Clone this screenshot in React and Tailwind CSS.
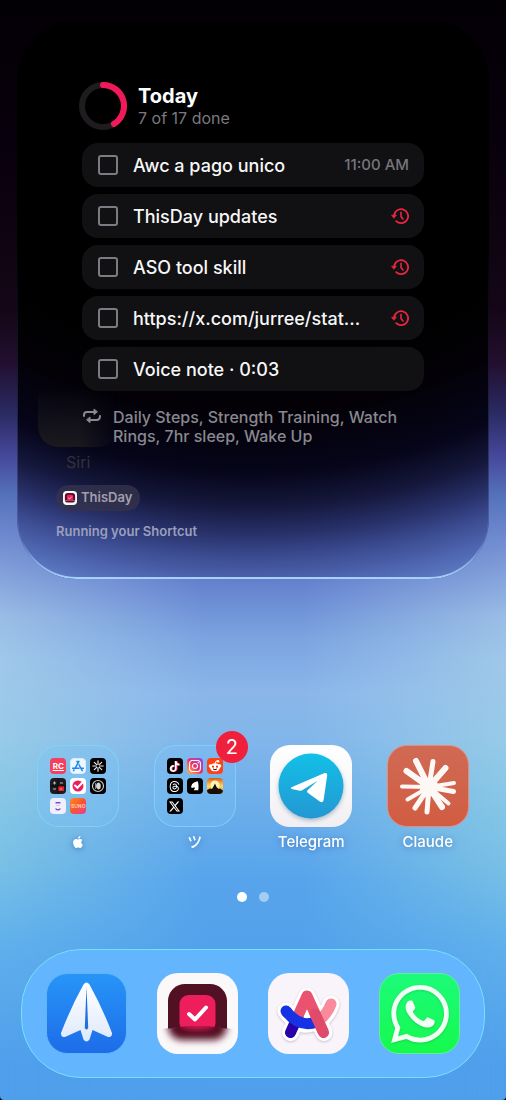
import React from "react";
import {
  SiTiktok,
  SiInstagram,
  SiReddit,
  SiThreads,
  SiX,
  SiAppstore,
  SiWhatsapp,
  SiApple,
} from "react-icons/si";

const tasks = [
  { id: "awc", title: "Awc a pago unico", time: "11:00 AM" },
  { id: "updates", title: "ThisDay updates", overdue: true },
  { id: "aso", title: "ASO tool skill", overdue: true },
  { id: "link", title: "https://x.com/jurree/stat...", overdue: true },
  { id: "voice", title: "Voice note · 0:03" },
];

function ProgressRing() {
  return (
    <svg viewBox="0 0 48 48" className="size-12 shrink-0" fill="none" strokeWidth="6" aria-hidden="true">
      <circle cx="24" cy="24" r="21" stroke="#1f1c20" />
      <path d="M24 3A21 21 0 0 1 35 41.9" stroke="#f2195b" strokeLinecap="round" />
    </svg>
  );
}

function OverdueIcon() {
  return (
    <svg viewBox="0 0 18 18" className="size-[18px] shrink-0" fill="none" stroke="#e8273f" strokeLinecap="round" strokeLinejoin="round" aria-hidden="true">
      <path d="M3.1 9.2A7 7 0 1 1 5.2 14.2" strokeWidth="1.8" />
      <path d="M10 5.4V9.4L12 12" strokeWidth="1.6" />
      <path d="M.9 8.2H5.3L3.1 11Z" fill="#e8273f" strokeWidth=".8" />
    </svg>
  );
}

function RepeatIcon() {
  return (
    <svg viewBox="0 0 20 16" className="h-4 w-5 shrink-0" fill="none" stroke="#8b8a92" strokeWidth="2" strokeLinecap="round" strokeLinejoin="round" aria-hidden="true">
      <path d="M2 8V7Q2 4 5 4H12" />
      <path d="M18 8Q18 12 14.500 12H8" />
      <path d="M12 1.400V6.600L15.200 4Z" fill="#8b8a92" strokeWidth="1" />
      <path d="M8 9.400V14.600L4.800 12Z" fill="#8b8a92" strokeWidth="1" />
    </svg>
  );
}

function TaskRow({ task }) {
  return (
    <li className="flex h-11 items-center rounded-2xl bg-[#111013] px-[15px]">
      <input
        id={task.id}
        type="checkbox"
        className="ml-px size-5 shrink-0 appearance-none rounded-[3px] border-2 border-[#7d7b82] bg-transparent checked:bg-[#f2195b]"
      />
      <label htmlFor={task.id} className="ml-[15px] min-w-0 flex-1 truncate text-[18px] font-medium text-[#f7f7f8]">
        {task.title}
      </label>
      {task.time && <time className="text-[15px] font-medium text-[#77757c]">{task.time}</time>}
      {task.overdue && <OverdueIcon />}
    </li>
  );
}

function Mini({ className, children }) {
  return (
    <span className={"flex size-4 items-center justify-center overflow-hidden rounded-[4px] " + className}>
      {children}
    </span>
  );
}

function Folder({ children }) {
  return (
    <span className="grid size-[82px] grid-cols-3 content-start gap-1 rounded-[22px] border border-[#7fd6f7]/80 bg-[#7cc4fa]/30 p-3">
      {children}
    </span>
  );
}

function BurstIcon({ className, stroke }) {
  return (
    <svg viewBox="0 0 16 16" className={className} stroke={stroke} strokeWidth="1.400" strokeLinecap="round" aria-hidden="true">
      <path d="M8 2V6M8 10V14M2 8H6M10 8H14M3.800 3.800L6.500 6.500M9.500 9.500L12.200 12.200M3.800 12.200L6.500 9.500M9.500 6.500L12.200 3.800" />
    </svg>
  );
}

function UtilityFolder() {
  return (
    <Folder>
      <Mini className="bg-[#f43f5e] text-[8px] leading-none font-bold text-white underline">RC</Mini>
      <Mini className="border border-[#d5ecff] bg-[#eef7ff]">
        <SiAppstore className="size-3 text-[#1c86ee]" />
      </Mini>
      <Mini className="bg-black">
        <BurstIcon className="size-[14px]" stroke="#e6e6e6" />
      </Mini>
      <Mini className="bg-[#1c1c20]">
        <svg viewBox="0 0 16 16" className="size-4" aria-hidden="true">
          <path d="M8 8H14V13H8Z" fill="#e8202c" />
          <path d="M3 5H6M4.500 3.500V6.500M10 5H13M3 11H6M10 11H12" stroke="#b9b9bd" />
          <path d="M8 0V16M0 8H16" stroke="#000" strokeWidth=".6" />
        </svg>
      </Mini>
      <Mini className="bg-white">
        <svg viewBox="0 0 16 16" className="size-4" fill="none" aria-hidden="true">
          <circle cx="8" cy="8" r="5.500" fill="#e91e5a" />
          <path d="M5 7.500L7.400 9.800L13 4" stroke="#fff" strokeWidth="2" strokeLinecap="round" />
        </svg>
      </Mini>
      <Mini className="bg-black">
        <svg viewBox="0 0 16 16" className="size-4" fill="none" aria-hidden="true">
          <circle cx="8" cy="8" r="5.500" stroke="#c9c9c9" strokeWidth="1.200" />
          <path d="M8 4.500Q10.800 4.500 10.800 8T8 11.500Q6 11 6 8T8 4.500Z" fill="#d5d5d5" />
          <path d="M5.500 5V11" stroke="#888" />
        </svg>
      </Mini>
      <Mini className="bg-[#f1effb]">
        <svg viewBox="0 0 16 16" className="size-4" fill="none" aria-hidden="true">
          <path d="M5.500 4H10.500V5.500H5.500Z" fill="#7150c8" />
          <path d="M6 11Q8 12.600 10 11" stroke="#7150c8" strokeWidth="1.400" strokeLinecap="round" />
          <path d="M6 7.500H10" stroke="#d4cdf0" />
        </svg>
      </Mini>
      <Mini className="bg-linear-to-br from-[#ff8a1c] via-[#f9542e] to-[#e63a8c] text-[5px] leading-none font-bold text-[#ffc9a8]">
        SUNO
      </Mini>
    </Folder>
  );
}

function SocialFolder() {
  return (
    <Folder>
      <Mini className="bg-black">
        <SiTiktok className="size-[11px] text-white drop-shadow-[1px_0_0_#f0285a]" />
      </Mini>
      <Mini className="bg-linear-to-tr from-[#fdb62e] via-[#ec2769] to-[#8a35e8]">
        <SiInstagram className="size-3 text-white" />
      </Mini>
      <Mini className="bg-[#ff4214]">
        <svg viewBox="0 0 16 16" className="size-4" aria-hidden="true">
          <circle cx="3.500" cy="8" r="1.800" fill="#fff" />
          <circle cx="12.500" cy="8" r="1.800" fill="#fff" />
          <ellipse cx="8" cy="9.300" rx="5" ry="4" fill="#fff" />
          <circle cx="11" cy="3.200" r="1.300" fill="#fff" />
          <path d="M8 6L9 3.200L11 3.400" stroke="#fff" fill="none" />
          <circle cx="6" cy="8.700" r="1.100" fill="#e33b12" />
          <circle cx="10" cy="8.700" r="1.100" fill="#e33b12" />
          <path d="M6 11Q8 12.300 10 11" stroke="#222" fill="none" />
        </svg>
      </Mini>
      <Mini className="bg-black">
        <SiThreads className="size-[11px] text-white" />
      </Mini>
      <Mini className="bg-black">
        <svg viewBox="0 0 16 16" className="size-4" fill="#fff" aria-hidden="true">
          <path d="M4 9Q4.500 5.500 7.500 4.200L10.600 3.200Q12 6 11.300 12.200H6.800Q8.300 10.500 7.600 9.300L5 9.900Z" />
        </svg>
      </Mini>
      <Mini className="bg-linear-to-b from-[#d35a13] via-[#ffd75c] to-[#ef8b1d]">
        <svg viewBox="0 0 16 16" className="size-4" aria-hidden="true">
          <circle cx="8" cy="7" r="4.500" fill="#fff3b8" />
          <path d="M0 16V12L3 10.500L5 11L7 7.500L8 5.500L9.500 9L11.500 11L13 10.500L16 12.500V16Z" fill="#17100a" />
        </svg>
      </Mini>
      <Mini className="bg-black">
        <SiX className="size-[11px] text-white" />
      </Mini>
    </Folder>
  );
}

function TelegramIcon() {
  return (
    <span className="flex size-[82px] items-center justify-center rounded-[20px] bg-linear-to-b from-white to-[#f1eff3]">
      <svg viewBox="0 0 66 66" className="size-[66px] drop-shadow-[0_2px_2px_rgba(20,80,120,0.35)]" aria-hidden="true">
        <defs>
          <linearGradient id="tg" x1="0" y1="0" x2="0" y2="1">
            <stop offset="0" stopColor="#12c0e6" />
            <stop offset="1" stopColor="#2497d3" />
          </linearGradient>
        </defs>
        <circle cx="33" cy="33" r="32.500" fill="url(#tg)" />
        <path d="M13.500 34.200L46.600 20.100Q49.400 19.300 49.200 22.200L45.600 47Q44.800 50.600 41.800 48.600L29.700 39.800Q28.400 38.600 29.600 37.200L39.500 27.800L24.600 37.100Q22.700 38 20.600 37.400L13.700 35.900Q12 35 13.500 34.200Z" fill="#fff" />
      </svg>
    </span>
  );
}

function ClaudeIcon() {
  return (
    <span className="flex size-[82px] items-center justify-center rounded-[20px] border border-[#ec8a76] bg-linear-to-b from-[#d06a54] to-[#d15c42]">
      <svg viewBox="0 0 80 80" className="size-20 shrink-0" stroke="#fdf7f5" strokeLinecap="round" aria-hidden="true">
        <circle cx="41" cy="41" r="9.500" fill="#fdf7f5" stroke="none" />
        <path d="M41 41L28 15M41 41L18.500 25M41 41L57.500 22M41 41L54 61" strokeWidth="6" />
        <path d="M41 41L45 15.500M41 41L39 66M41 41L65.500 45.500M41 41L27 62" strokeWidth="5" />
        <path d="M41 41L14 40.500M41 41L19.500 53.500M41 41L66 37M41 41L60.500 57.500" strokeWidth="4" />
      </svg>
    </span>
  );
}

function SparkIcon() {
  return (
    <svg viewBox="0 0 81 81" className="size-[81px]" aria-hidden="true">
      <defs>
        <linearGradient id="sparkBg" x1="0" y1="0" x2="0" y2="1">
          <stop offset="0" stopColor="#2795f8" />
          <stop offset="1" stopColor="#1d6ce8" />
        </linearGradient>
        <linearGradient id="sparkWing" x1="0" y1="0" x2="0" y2="1">
          <stop offset="0" stopColor="#fff" />
          <stop offset="1" stopColor="#dfe9fb" />
        </linearGradient>
      </defs>
      <rect x=".5" y=".5" width="80" height="80" rx="21" fill="url(#sparkBg)" stroke="#5fb4fb" />
      <path d="M37.500 11.500Q40.500 7.500 43.500 11.500Q56 34 66 60Q66.300 65 61.500 63.800L46.500 57L43.500 66.500Q40.500 70.500 37.500 66.500L34.500 57L19.500 63.800Q14.700 65 15 60Q25 34 37.500 11.500Z" fill="url(#sparkWing)" />
      <path d="M40.500 14L42.200 55Q40.500 58 38.800 55Z" fill="#2370dd" />
    </svg>
  );
}

function ThisDayIcon({ className }) {
  return (
    <svg viewBox="0 0 81 81" className={className} aria-hidden="true">
      <defs>
        <filter id="soft" x="-30%" y="-60%" width="160%" height="220%">
          <feGaussianBlur stdDeviation="3.500" />
        </filter>
        <clipPath id="upper">
          <path d="M0 0H81V57Q40 50 0 57Z" />
        </clipPath>
        <clipPath id="lower">
          <path d="M0 56.500Q40 49.500 81 56.500V81H0Z" />
        </clipPath>
      </defs>
      <rect width="81" height="81" rx="21" fill="#fbf8fa" />
      <g clipPath="url(#upper)">
        <rect x="11" y="11" width="59" height="70" rx="17" fill="#521024" />
        <rect x="22.500" y="22" width="36" height="37" rx="9" fill="#ee1d5b" />
        <path d="M32 41L38 46.500L49 34.500" fill="none" stroke="#fff" strokeWidth="4" strokeLinecap="round" strokeLinejoin="round" />
      </g>
      <g clipPath="url(#lower)">
        <rect x="11" y="38" width="59" height="29" rx="14" fill="#521024" filter="url(#soft)" />
        <ellipse cx="40.500" cy="51" rx="17" ry="5" fill="#ee1d5b" filter="url(#soft)" />
      </g>
    </svg>
  );
}

function ArcIcon() {
  return (
    <svg viewBox="0 0 81 81" className="size-[81px]" fill="none" strokeLinecap="round" strokeLinejoin="round" aria-hidden="true">
      <rect width="81" height="81" rx="21" fill="#f8f4fa" />
      <g className="drop-shadow-[0_1px_1px_rgba(60,40,80,0.25)]" stroke="#fff" strokeWidth="17">
        <path d="M22.500 59.500L39 23L56 59.500" />
        <path d="M18 38Q30 53 40 51Q57 49 63 31" />
      </g>
      <path d="M30 43L22.500 59.500" stroke="#2a00a8" strokeWidth="11" />
      <path d="M50 48Q59 42 63 31" stroke="#f98b9d" strokeWidth="11" />
      <path d="M29.500 44L39 23L55.500 59.500" stroke="#e9536f" strokeWidth="11" strokeLinecap="butt" />
      <path d="M18 38Q31 55 49 49" stroke="#1632e4" strokeWidth="11" strokeLinecap="butt" />
      <path d="M18 38L19 39.200" stroke="#1632e4" strokeWidth="11" />
      <path d="M47 41L55.500 59.500" stroke="#e04b6b" strokeWidth="11" />
      <path d="M39 37L42.500 44.500Q39 46 35.500 44.500Z" fill="#fff" />
    </svg>
  );
}

function WhatsAppIcon() {
  return (
    <span className="flex size-[81px] items-center justify-center rounded-[20px] border border-[#62ef98] bg-linear-to-b from-[#1cfb79] to-[#16f94b]">
      <SiWhatsapp className="size-[58px] text-[#f1fff5] drop-shadow-[0_1px_1px_rgba(0,120,40,0.25)]" />
    </span>
  );
}

function AppLink({ label, name, badge, children }) {
  return (
    <a href="#" aria-label={name} className="flex flex-col items-center gap-[5px] text-center">
      <span className="relative">
        {children}
        {badge && (
          <span className="absolute -top-[14px] -right-3 flex size-8 items-center justify-center rounded-full bg-[#f01f3c] text-[20px] text-white">
            {badge}
          </span>
        )}
      </span>
      <span className="flex h-5 items-center text-[15px] font-medium text-white drop-shadow-[0_1px_3px_rgba(20,70,150,0.5)]">
        {label}
      </span>
    </a>
  );
}

function DockButton({ name, children }) {
  return (
    <button type="button" aria-label={name} className="flex justify-center">
      {children}
    </button>
  );
}

function ShortcutPanel() {
  return (
    <section className="relative mx-[17px] mt-5 overflow-hidden rounded-[60px] bg-[radial-gradient(135%_100%_at_50%_0,#000_60%,#030106_70%,#06051a_81%,#15183c_87%,#28316a_92%,#3b4b90_96%,#4c62ac_100%,#6080c8_105%)]">
      <div className="pointer-events-none absolute inset-0 rounded-[60px] border border-[#8090e0]/25 mask-[linear-gradient(transparent_40%,black_75%)]" />
      <div className="pointer-events-none absolute inset-0 rounded-[60px] border-2 border-[#a9d3fb] mask-[linear-gradient(transparent_93%,black_100%)]" />
      <div className="absolute top-[346px] left-[21px] h-[81px] w-20 rounded-[20px] bg-linear-to-b from-transparent from-25% to-[#1b1a1e] mask-[linear-gradient(to_right,black_50%,transparent)]" />

      <div className="relative px-[65px] pt-[62px]">
        <header className="-ml-[3px] flex items-center gap-[11px]">
          <ProgressRing />
          <div>
            <h1 className="text-[20px] leading-6 font-bold text-white">Today</h1>
            <p className="text-[16px] leading-5 text-[#7b797f]">7 of 17 done</p>
          </div>
        </header>
        <ul className="mt-[13px] flex flex-col gap-[7px]">
          {tasks.map((task) => (
            <TaskRow key={task.id} task={task} />
          ))}
        </ul>
        <div className="mt-[17px] flex gap-[11px]">
          <RepeatIcon />
          <p className="text-[16px] leading-[19px] font-medium text-[#89888f]">
            Daily Steps, Strength Training, Watch Rings, 7hr sleep, Wake Up
          </p>
        </div>
      </div>

      <div className="relative flex flex-col items-start pt-[6px] pb-[38px] pl-[39px]">
        <p className="ml-[10px] text-[16px] leading-5 text-[#343237]">Siri</p>
        <div className="mt-[13px] flex h-[26px] items-center gap-1 rounded-full bg-[#34334c]/80 pr-2 pl-[7px]">
          <ThisDayIcon className="size-[14px]" />
          <span className="text-[13px] font-semibold text-[#a09fae]">ThisDay</span>
        </div>
        <p className="mt-[10px] text-[13px] leading-5 font-semibold text-[#9a9fbc]">Running your Shortcut</p>
      </div>
    </section>
  );
}

export default function App() {
  return (
    <div className="min-h-screen bg-black font-['Inter','Noto_Sans_CJK_JP',sans-serif]">
      <main className="relative isolate flex min-h-screen flex-col overflow-hidden rounded-b-[4px] bg-[linear-gradient(#030005_0%,#08000c_12%,#140616_28%,#220f30_33%,#2a2a62_37.5%,#46489c_41.5%,#5472ba_45%,#6a85cc_48%,#86a4dc_52.5%,#9abde6_56%,#a0c8ea_60%,#98cbe8_67%,#84c6e6_74%,#78c0e6_79%,#60b0ec_86%,#4f9fec_97%)]">
        <div className="pointer-events-none absolute inset-0 -z-10 bg-[linear-gradient(transparent_45%,#5a74c4_51%,#6a88d2_54%,#7ba4e0_58%,#8ab6ea_63%,#82b6ea_67%,#6caeea_73%,#57a4ec_80%,#52a0ea_88%,#4f9fec_100%)] mask-[linear-gradient(to_right,transparent,black_40%,black_60%,transparent)]" />

        <ShortcutPanel />

        <nav aria-label="Apps" className="mx-5 mt-[166px] grid grid-cols-4">
          <AppLink name="Apple folder" label={<SiApple className="size-3" />}>
            <UtilityFolder />
          </AppLink>
          <AppLink name="ツ" label="ツ" badge="2">
            <SocialFolder />
          </AppLink>
          <AppLink name="Telegram" label="Telegram">
            <TelegramIcon />
          </AppLink>
          <AppLink name="Claude" label="Claude">
            <ClaudeIcon />
          </AppLink>
        </nav>

        <div className="mt-10 flex justify-center gap-3">
          <span className="size-[10px] rounded-full bg-white" />
          <span className="size-[10px] rounded-full bg-white/45" />
        </div>

        <footer className="mx-[21px] mt-[47px] mb-[21px] grid grid-cols-4 rounded-[60px] border border-[#76e0fd] bg-[#63b5fe] px-[9px] py-[23px]">
          <DockButton name="Mail">
            <SparkIcon />
          </DockButton>
          <DockButton name="ThisDay">
            <ThisDayIcon className="size-[81px]" />
          </DockButton>
          <DockButton name="Arc">
            <ArcIcon />
          </DockButton>
          <DockButton name="WhatsApp">
            <WhatsAppIcon />
          </DockButton>
        </footer>
      </main>
    </div>
  );
}
